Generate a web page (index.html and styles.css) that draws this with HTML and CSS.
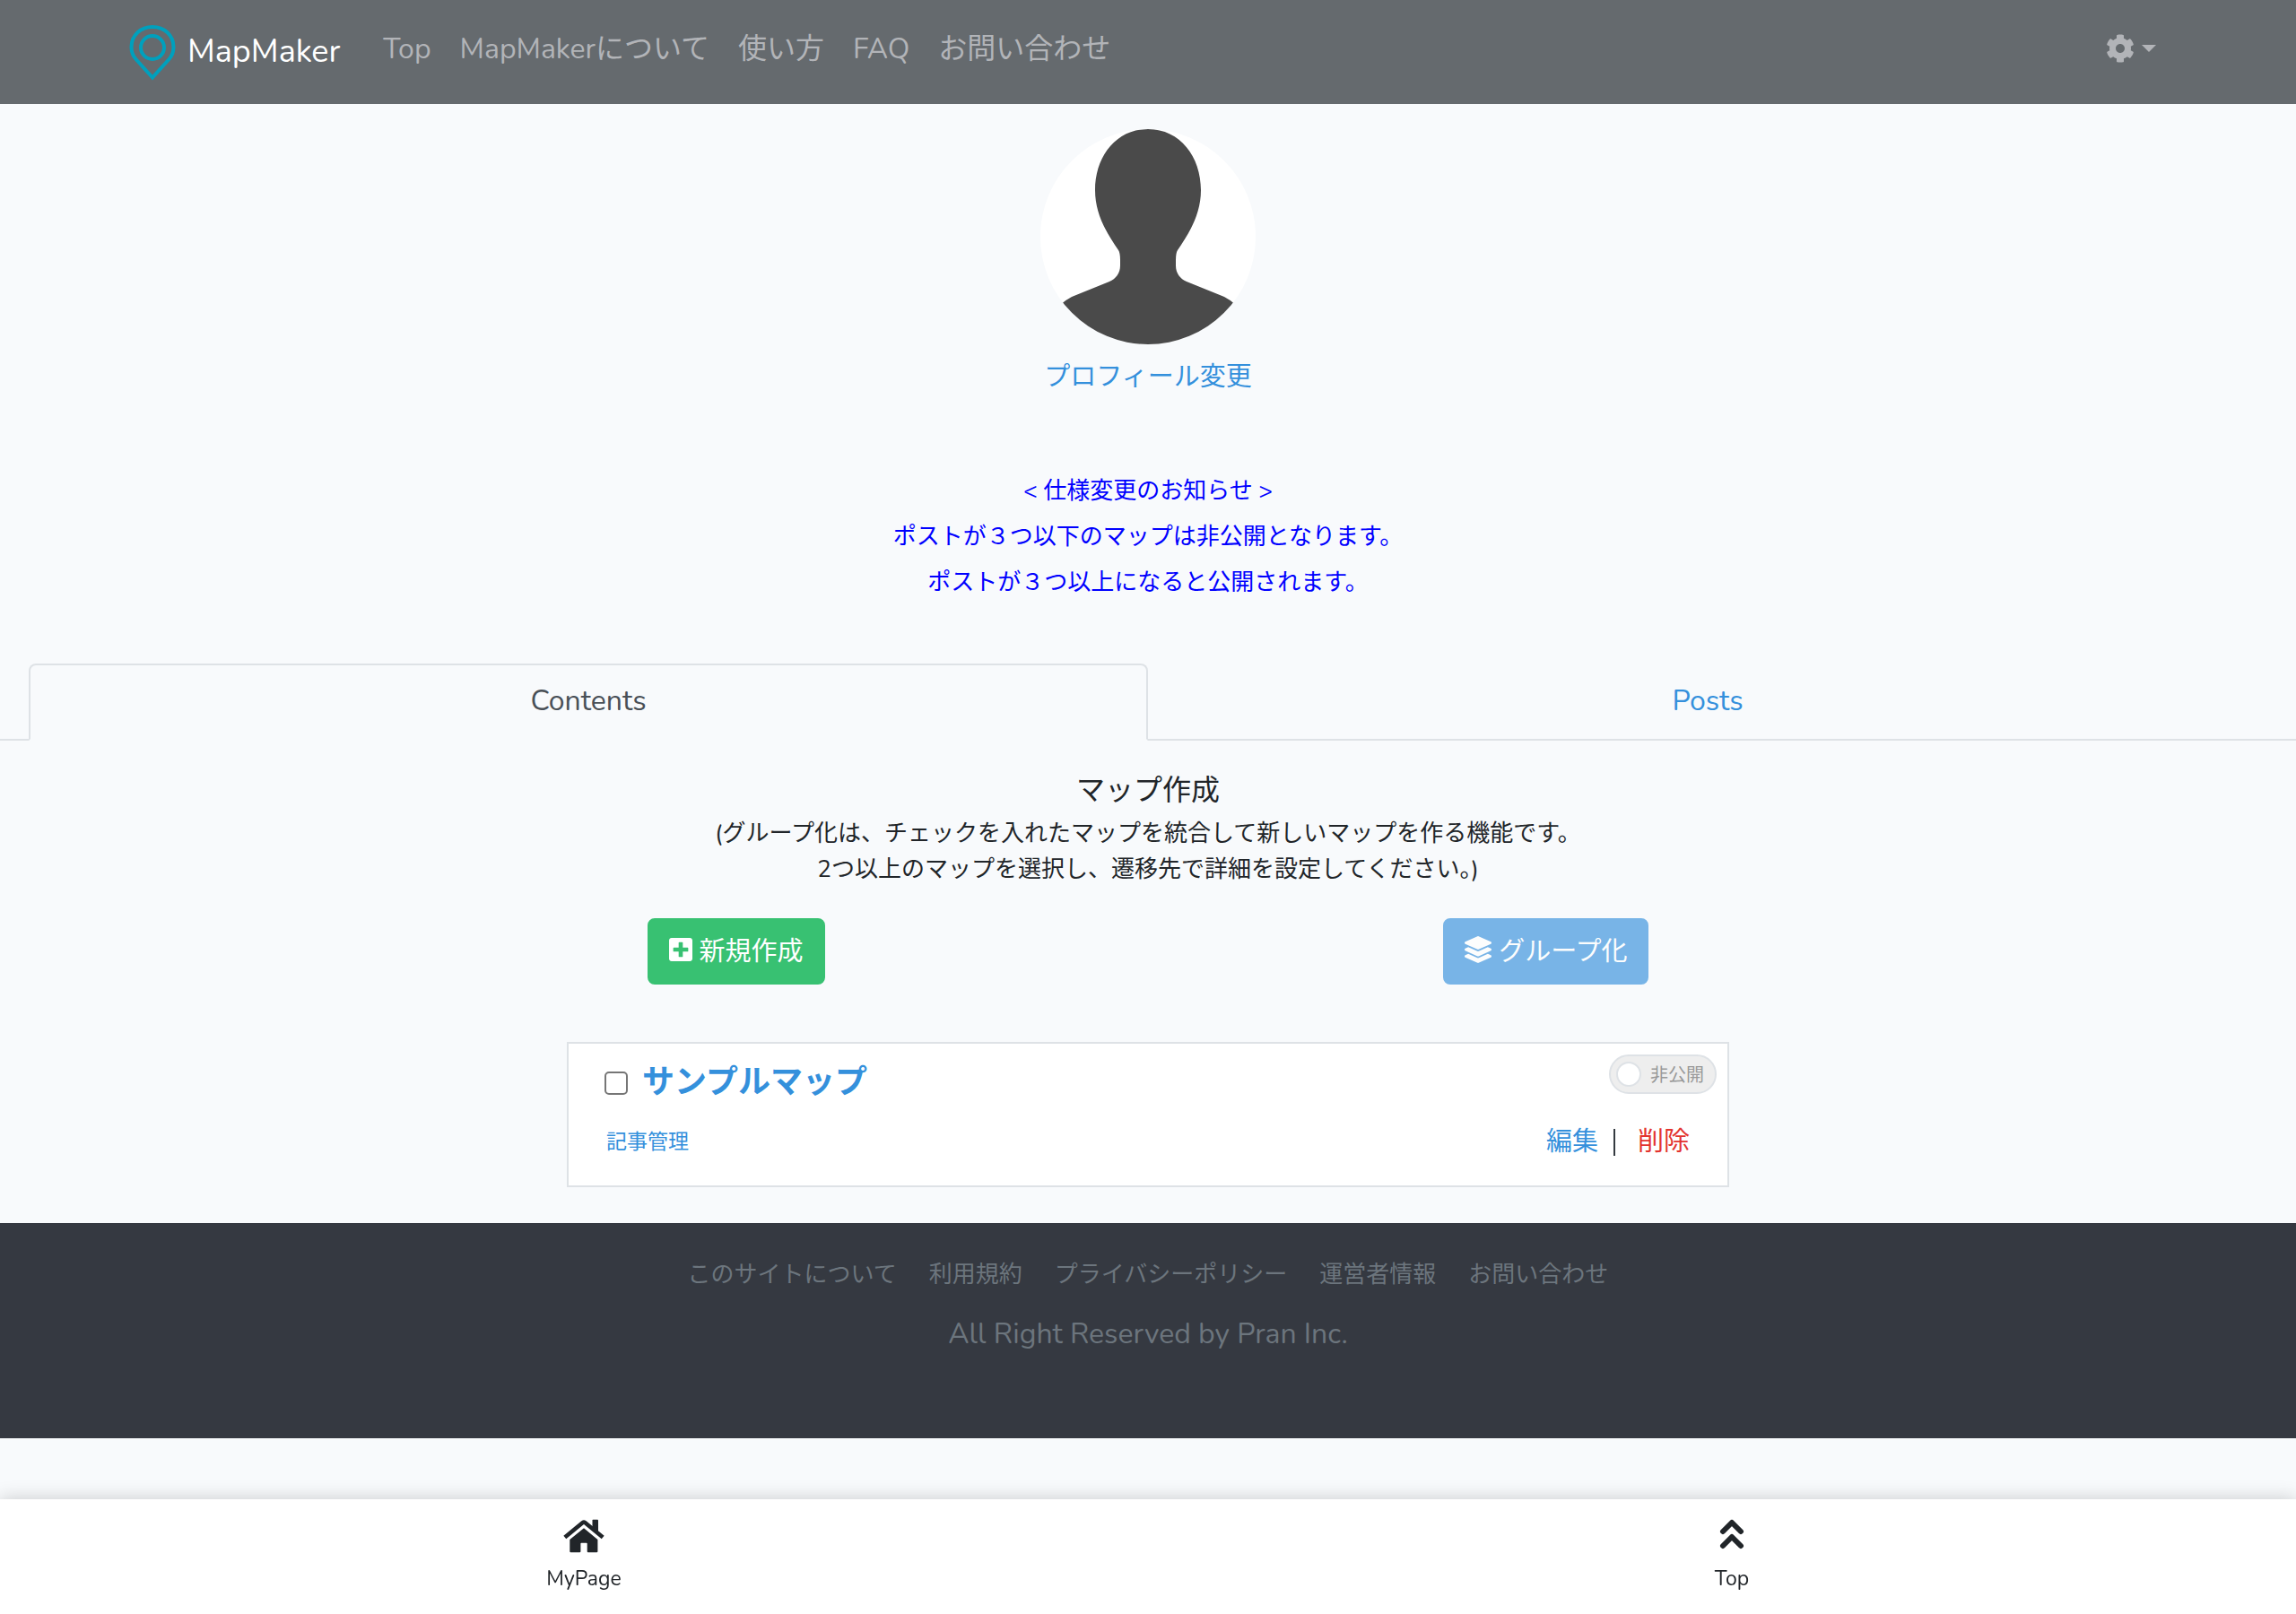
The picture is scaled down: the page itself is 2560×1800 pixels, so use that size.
FILE: index.html
```html
<!DOCTYPE html>
<html lang="ja">
<head>
    <meta charset="UTF-8">
    <meta name="viewport" content="width=device-width, initial-scale=1.0">
    <title>MapMaker</title>
    <link rel="stylesheet" href="styles.css">
</head>
<body>
    <header class="navbar">
        <div class="navbar-inner">
            <a class="brand" href="#">
                <svg class="brand-icon" viewBox="0 0 60 64" fill="none" stroke="#00a0bd" aria-hidden="true">
                    <path d="M30 60.500L11.500 40C7.500 35.500 6.500 31 6.500 26.500C6.500 13 17 4 30 4S53.500 13 53.500 26.500C53.500 31 52.500 35.500 48.500 40Z" stroke-width="4"/>
                    <ellipse cx="30" cy="27" rx="13" ry="13" stroke-width="4"/>
                </svg>
                <span>MapMaker</span>
            </a>
            <nav class="nav-links">
                <a href="#">Top</a>
                <a href="#">MapMakerについて</a>
                <a href="#">使い方</a>
                <a href="#">FAQ</a>
                <a href="#">お問い合わせ</a>
            </nav>
            <button class="settings" type="button" aria-label="設定">
                <svg class="settings-icon" viewBox="0 0 512 512" fill="currentColor" aria-hidden="true">
                    <path d="M487.4 315.7l-42.6-24.6c4.3-23.2 4.3-47 0-70.2l42.6-24.6c4.9-2.8 7.1-8.6 5.5-14-11.1-35.6-30-67.8-54.7-94.6-3.8-4.1-10-5.1-14.8-2.3L380.8 110c-17.9-15.4-38.5-27.3-60.8-35.1V25.8c0-5.6-3.9-10.500-9.4-11.7-36.7-8.2-74.3-7.8-109.2 0-5.500 1.2-9.4 6.1-9.4 11.7V75c-22.2 7.9-42.8 19.8-60.8 35.1L88.7 85.500c-4.9-2.8-11-1.9-14.8 2.3-24.7 26.7-43.6 58.9-54.7 94.6-1.7 5.4.6 11.2 5.500 14L67.3 221c-4.3 23.2-4.3 47 0 70.2l-42.6 24.6c-4.9 2.8-7.1 8.6-5.500 14 11.1 35.6 30 67.8 54.7 94.6 3.8 4.1 10 5.1 14.8 2.3l42.6-24.6c17.9 15.4 38.500 27.3 60.8 35.1v49.2c0 5.6 3.9 10.500 9.4 11.7 36.7 8.2 74.3 7.8 109.2 0 5.500-1.2 9.4-6.1 9.4-11.7v-49.2c22.2-7.9 42.8-19.8 60.8-35.1l42.6 24.6c4.9 2.8 11 1.9 14.8-2.3 24.7-26.7 43.6-58.9 54.7-94.6 1.500-5.500-.7-11.3-5.6-14.1zM256 336c-44.1 0-80-35.9-80-80s35.9-80 80-80 80 35.9 80 80-35.9 80-80 80z"/>
                </svg>
                <span class="caret"></span>
            </button>
        </div>
    </header>

    <main>
        <section class="profile">
            <svg class="avatar" viewBox="0 0 240 240" role="img" aria-label="プロフィール画像">
                <rect width="240" height="240" fill="#fff"/>
                <path d="M120 0C84 0 61 31 61 68C61 95 74 116 87 135Q89 138 89 146V152C89 161 84 167 77 170L35 187Q29 190 22 196V240H218V196Q211 190 205 187L163 170C156 167 151 161 151 152V146Q151 138 153 135C166 116 179 95 179 68C179 31 156 0 120 0Z" fill="#4a4a4a"/>
            </svg>
            <a class="profile-link" href="#">プロフィール変更</a>
        </section>

        <p class="notice">
            &lt; 仕様変更のお知らせ &gt;<br>
            ポストが３つ以下のマップは非公開となります。<br>
            ポストが３つ以上になると公開されます。
        </p>

        <nav class="tabs">
            <a class="tab active" href="#">Contents</a>
            <a class="tab" href="#">Posts</a>
        </nav>

        <section class="create">
            <h1>マップ作成</h1>
            <p>(グループ化は、チェックを入れたマップを統合して新しいマップを作る機能です。<br>2つ以上のマップを選択し、遷移先で詳細を設定してください。)</p>
            <div class="create-actions">
                <button class="btn btn-success" type="button">
                    <svg class="icon-plus" viewBox="0 32 448 448" fill="currentColor" aria-hidden="true">
                        <path d="M400 32H48C21.500 32 0 53.500 0 80v352c0 26.500 21.500 48 48 48h352c26.500 0 48-21.500 48-48V80c0-26.500-21.500-48-48-48zm-32 252c0 6.6-5.4 12-12 12h-92v92c0 6.6-5.4 12-12 12h-56c-6.6 0-12-5.4-12-12v-92H92c-6.6 0-12-5.4-12-12v-56c0-6.6 5.4-12 12-12h92v-92c0-6.6 5.4-12 12-12h56c6.6 0 12 5.4 12 12v92h92c6.6 0 12 5.4 12 12v56z"/>
                    </svg>
                    新規作成
                </button>
                <button class="btn btn-primary" type="button" disabled>
                    <svg class="icon-layers" viewBox="0 0 512 512" fill="currentColor" aria-hidden="true">
                        <path d="M12.41 148.02l232.94 105.67c6.8 3.09 14.49 3.09 21.29 0l232.94-105.67c16.55-7.51 16.55-32.52 0-40.03L266.65 2.31a25.607 25.607 0 0 0-21.29 0L12.41 107.98c-16.55 7.51-16.55 32.53 0 40.04zm487.18 88.28l-58.09-26.33-161.64 73.27c-7.56 3.43-15.59 5.17-23.86 5.17s-16.29-1.74-23.86-5.17L70.51 209.97l-58.1 26.33c-16.55 7.5-16.55 32.5 0 40l232.94 105.59c6.8 3.08 14.49 3.08 21.29 0L499.59 276.3c16.55-7.5 16.55-32.5 0-40zm0 127.8l-57.87-26.23-161.86 73.37c-7.56 3.43-15.59 5.17-23.86 5.17s-16.29-1.74-23.86-5.17L70.29 337.87 12.41 364.1c-16.55 7.5-16.55 32.5 0 40l232.94 105.59c6.8 3.08 14.49 3.08 21.29 0L499.59 404.1c16.55-7.5 16.55-32.5 0-40z"/>
                    </svg>
                    グループ化
                </button>
            </div>
        </section>

        <article class="map-card">
            <div class="map-row">
                <div class="map-title">
                    <input type="checkbox" id="map1" aria-label="サンプルマップを選択">
                    <a href="#">サンプルマップ</a>
                </div>
                <button class="toggle" type="button" role="switch" aria-checked="false">
                    <span class="toggle-knob"></span>
                    <span class="toggle-text">非公開</span>
                </button>
            </div>
            <div class="map-row map-links">
                <a class="manage-link" href="#">記事管理</a>
                <div class="map-actions">
                    <a class="edit-link" href="#">編集</a>
                    <a class="delete-link" href="#">削除</a>
                </div>
            </div>
        </article>
    </main>

    <footer class="footer">
        <nav class="footer-links">
            <a href="#">このサイトについて</a>
            <a href="#">利用規約</a>
            <a href="#">プライバシーポリシー</a>
            <a href="#">運営者情報</a>
            <a href="#">お問い合わせ</a>
        </nav>
        <p>All Right Reserved by Pran Inc.</p>
    </footer>

    <nav class="bottom-bar">
        <a href="#">
            <svg class="bottom-icon" viewBox="0 0 48 38" fill="currentColor" aria-hidden="true">
                <path d="M33.500 1.500Q33.500.7 34.300.7H39.200Q40 .7 40 1.500V15L33.500 10Z"/>
                <path d="M2.800 20.500L22.800 4Q24 3.100 25.200 4L45.200 20.500" fill="none" stroke="currentColor" stroke-width="4.600" stroke-linejoin="round"/>
                <path d="M24 10.300L39.400 22.900V36.200Q39.400 37.300 38.300 37.300H28.800Q27.700 37.300 27.700 36.200V27.500Q27.700 26.700 26.900 26.700H21.200Q20.400 26.700 20.400 27.500V36.200Q20.400 37.300 19.300 37.300H9.400Q8.300 37.300 8.300 36.200V22.900Z"/>
            </svg>
            <span>MyPage</span>
        </a>
        <a href="#">
            <svg class="bottom-icon" viewBox="0 0 48 38" fill="none" stroke="currentColor" stroke-width="6" stroke-linecap="round" stroke-linejoin="round" aria-hidden="true">
                <path d="M14 14L24 4L34 14M14 30L24 20L34 30"/>
            </svg>
            <span>Top</span>
        </a>
    </nav>
</body>
</html>
```
FILE: styles.css
```css
* {
    box-sizing: border-box;
}
body {
    margin: 0;
    background: #f8fafc;
    color: #212529;
    font-family: Nunito, Lato, "Noto Sans CJK JP", sans-serif;
    font-size: 32px;
    line-height: 48px;
}
h1, p {
    margin: 0;
    font-size: 32px;
    font-weight: normal;
}
a {
    color: #3490dc;
    text-decoration: none;
}
button {
    font-family: inherit;
    cursor: pointer;
}
svg {
    flex: none;
}

/* header */
.navbar {
    background: #656a6e;
}
.navbar-inner {
    display: flex;
    align-items: flex-start;
    max-width: 2280px;
    height: 116px;
    margin: 0 auto;
}
.brand {
    display: flex;
    align-items: center;
    gap: 9px;
    margin-right: 32px;
    padding-top: 26px;
    color: #fff;
    font-size: 36px;
    line-height: 64px;
}
.brand-icon {
    width: 60px;
    height: 64px;
}
.nav-links {
    display: flex;
    flex: 1;
    padding-top: 31px;
}
.nav-links a {
    padding: 0 16px;
    color: #b2b4b8;
}
.settings {
    display: flex;
    align-items: center;
    gap: 8px;
    margin-top: 30px;
    padding: 0 16px;
    border: 0;
    height: 48px;
    background: none;
    color: #b2b4b8;
}
.settings-icon {
    width: 32px;
    height: 32px;
}
.caret {
    border-top: 8px solid;
    border-left: 8px solid transparent;
    border-right: 8px solid transparent;
}

/* profile */
.profile {
    display: flex;
    flex-direction: column;
    align-items: center;
    padding-top: 28px;
}
.avatar {
    width: 240px;
    height: 240px;
    border-radius: 50%;
}
.profile-link {
    margin-top: 13px;
    font-size: 29px;
}
.notice {
    padding: 77px 16px 65px;
    color: #00f;
    font-size: 26px;
    line-height: 51px;
    text-align: center;
}

/* tabs */
.tabs {
    display: flex;
    padding: 0 32px;
    border-bottom: 2px solid #dee2e6;
}
.tab {
    flex: 1;
    margin-bottom: -2px;
    padding: 16px 32px 18px;
    border: 2px solid transparent;
    border-radius: 8px 8px 0 0;
    text-align: center;
}
.tab.active {
    border-color: #dee2e6 #dee2e6 #f8fafc;
    background: #f8fafc;
    color: #495057;
}

/* map creation */
.create {
    padding: 32px 32px 64px;
    text-align: center;
}
.create p {
    margin-top: 4px;
    font-size: 26px;
    line-height: 40px;
}
.create-actions {
    display: flex;
    justify-content: space-evenly;
    margin-top: 34px;
}
.btn {
    display: flex;
    align-items: center;
    gap: 8px;
    height: 74px;
    padding: 0 22px 4px;
    border: 2px solid;
    border-radius: 8px;
    color: #fff;
    font-size: 29px;
}
.btn-success {
    border-color: #38c172;
    background: #38c172;
}
.btn-primary {
    border-color: #3490dc;
    background: #3490dc;
}
.btn:disabled {
    opacity: 0.65;
}
.icon-plus {
    width: 26px;
    height: 26px;
}
.icon-layers {
    width: 30px;
    height: 30px;
}

/* map card */
.map-card {
    max-width: 1296px;
    margin: 0 auto 40px;
    padding: 12px 12px 24px 40px;
    border: 2px solid #dee2e6;
    background: #fff;
}
.map-row {
    display: flex;
    align-items: flex-start;
    justify-content: space-between;
}
.map-title {
    display: flex;
    align-items: center;
    gap: 16px;
    padding-top: 8px;
    font-size: 36px;
    font-weight: bold;
}
.map-title input {
    appearance: none;
    width: 26px;
    height: 26px;
    margin: 0;
    border: 2px solid #767676;
    border-radius: 5px;
    background: #fff;
}
.toggle {
    display: flex;
    align-items: center;
    gap: 10px;
    width: 120px;
    height: 44px;
    padding: 0 6px;
    border: 2px solid #dee2e6;
    border-radius: 22px;
    background: #eee;
    color: #999;
    font-size: 20px;
}
.toggle-knob {
    width: 28px;
    height: 28px;
    border: 2px solid #dee2e6;
    border-radius: 50%;
    background: #fff;
}
.map-links {
    align-items: center;
    padding: 18px 30px 0 2px;
}
.manage-link {
    font-size: 23px;
}
.map-actions {
    display: flex;
    align-items: center;
    font-size: 29px;
}
.edit-link {
    padding-right: 17px;
}
.delete-link {
    padding-left: 25px;
    border-left: 2px solid #343a40;
    line-height: 30px;
    color: #e3342f;
}

/* footer */
.footer {
    height: 240px;
    padding-top: 34px;
    background: #353941;
    color: #6c757d;
    text-align: center;
}
.footer-links {
    display: flex;
    justify-content: center;
    gap: 36px;
    margin-bottom: 18px;
    font-size: 26px;
}
.footer-links a {
    color: inherit;
}

/* fixed bottom menu */
.bottom-bar {
    position: fixed;
    right: 0;
    bottom: 0;
    left: 0;
    display: flex;
    height: 128px;
    padding-top: 22px;
    background: #fff;
    box-shadow: 0 0 20px rgba(0, 0, 0, 0.2);
}
.bottom-bar a {
    display: flex;
    flex: 1;
    flex-direction: column;
    align-items: center;
    padding-left: 22px;
    color: #212529;
    font-size: 23px;
    line-height: 32px;
}
.bottom-bar span {
    margin-top: 13px;
}
.bottom-icon {
    width: 48px;
    height: 38px;
}
```
